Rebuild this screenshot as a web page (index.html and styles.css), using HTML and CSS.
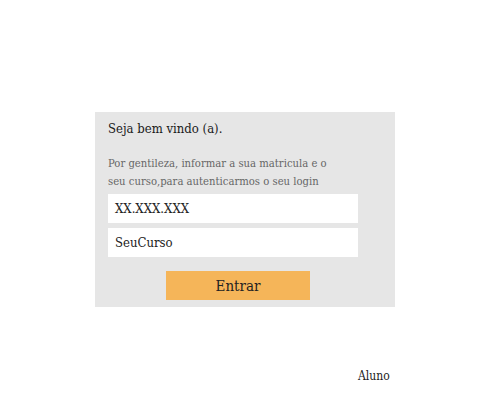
FILE: index.html
```html
<!DOCTYPE html>
<html>
<head>
<meta charset="utf-8">
<link rel="stylesheet" href="styles.css">
</head>
<body>
<div class="page">
  <div class="card">
    <h1 class="title">Seja bem vindo (a).</h1>
    <p class="info">Por gentileza, informar a sua matricula e o seu curso,para autenticarmos o seu login</p>
    <div class="field">XX.XXX.XXX</div>
    <div class="field">SeuCurso</div>
    <div class="actions"><button class="btn">Entrar</button></div>
  </div>
  <div class="footer">Aluno</div>
</div>
</body>
</html>
```
FILE: styles.css
```css
html, body { margin: 0; padding: 0; background: #fff; }
body { width: 480px; height: 402px; font-family: "DejaVu Serif Condensed", "DejaVu Serif", serif; font-stretch: condensed; color: #222; }
.page { padding-top: 112px; padding-left: 95px; }
.card { width: 300px; height: 195px; box-sizing: border-box; background: #e6e6e6; padding: 8px 13px 0; }
.title { margin: 0; font-size: 13px; font-weight: normal; line-height: 18px; color: #1a1a1a; }
.info { margin: 17px 0 0; font-size: 11.2px; line-height: 18px; color: #666; width: 232px; }
.field { width: 250px; height: 29px; background: #fff; box-sizing: border-box; padding-left: 7px; font-size: 13px; line-height: 29px; color: #222; margin-top: 5px; }
.field:first-of-type { margin-top: 3px; }
.actions { display: flex; width: 274px; margin-top: 14px; }
.btn { width: 144px; height: 29px; border: 0; background: #f5b559; font-family: inherit; font-stretch: condensed; font-size: 15px; color: #222; padding: 0; margin-left: 58px; }
.footer { margin-top: 62px; margin-left: 263px; font-size: 12px; color: #222; }
```
